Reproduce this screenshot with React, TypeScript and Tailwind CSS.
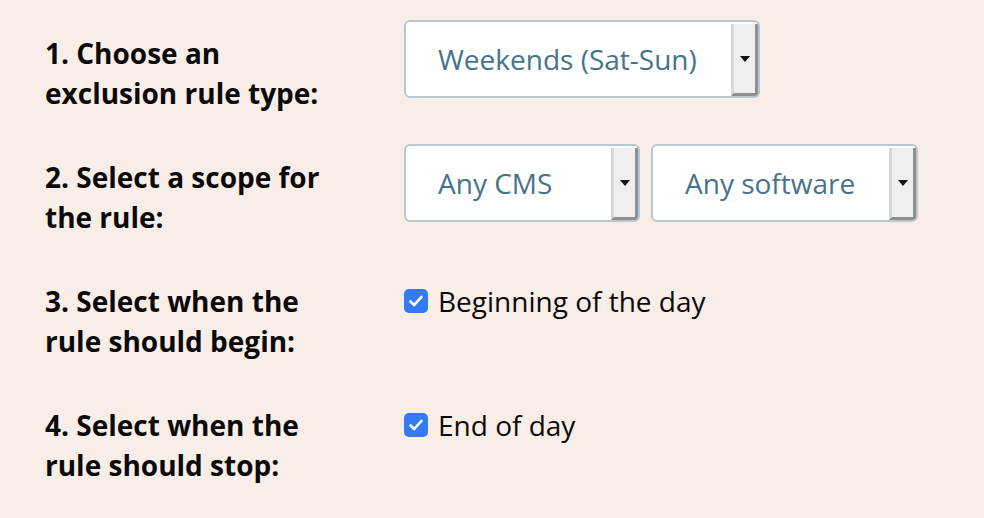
import React from "react";

function Select({ label, width }: { label: string; width: string }) {
  return (
    <div className={`${width} h-[78px] flex bg-white border-2 border-[#b8c7cf] rounded-[6px] overflow-hidden`}>
      <div className="flex-1 flex items-center pl-[32px] text-[28px] text-[#46738a] whitespace-nowrap">
        {label}
      </div>
      <div className="w-[27px] mt-[2px] bg-[#efefef] border-l-[3px] border-l-[#d6d6d6] border-r-[3px] border-r-[#8f8f8f] border-b-[3px] border-b-[#8f8f8f] flex items-center justify-center">
        <svg width="10" height="6" viewBox="0 0 10 6">
          <path d="M0 0 L10 0 L5 6 Z" fill="#111" />
        </svg>
      </div>
    </div>
  );
}

function Check({ label }: { label: string }) {
  return (
    <div className="flex items-center gap-[10px] pt-[13px] leading-[40px] text-[28px] text-[#0a0a0a]">
      <div className="w-[24px] h-[24px] rounded-[5px] bg-[#3479f6] flex items-center justify-center">
        <svg width="16" height="14" viewBox="0 0 16 14">
          <path d="M2.5 7.5 L6.2 11 L13.5 2.8" stroke="white" strokeWidth="2.6" fill="none" strokeLinecap="round" strokeLinejoin="round" />
        </svg>
      </div>
      <span>{label}</span>
    </div>
  );
}

function Row({ label, children }: { label: React.ReactNode; children: React.ReactNode }) {
  return (
    <div className="flex items-start h-[124px]">
      <div className="w-[359px] pt-[13px] text-[28px] leading-[40px] font-bold text-[#0a0a0a]">{label}</div>
      {children}
    </div>
  );
}

export default function App() {
  return (
    <div
      className="w-[984px] h-[518px] bg-[#f9ede8] pl-[45px] pt-[20px] overflow-hidden"
      style={{ fontFamily: '"Open Sans", sans-serif' }}
    >
      <Row label={<>1. Choose an<br />exclusion rule type:</>}>
        <Select label="Weekends (Sat-Sun)" width="w-[356px]" />
      </Row>
      <Row label={<>2. Select a scope for<br />the rule:</>}>
        <div className="flex gap-[11px]">
          <Select label="Any CMS" width="w-[236px]" />
          <Select label="Any software" width="w-[267px]" />
        </div>
      </Row>
      <Row label={<>3. Select when the<br />rule should begin:</>}>
        <Check label="Beginning of the day" />
      </Row>
      <Row label={<>4. Select when the<br />rule should stop:</>}>
        <Check label="End of day" />
      </Row>
    </div>
  );
}
